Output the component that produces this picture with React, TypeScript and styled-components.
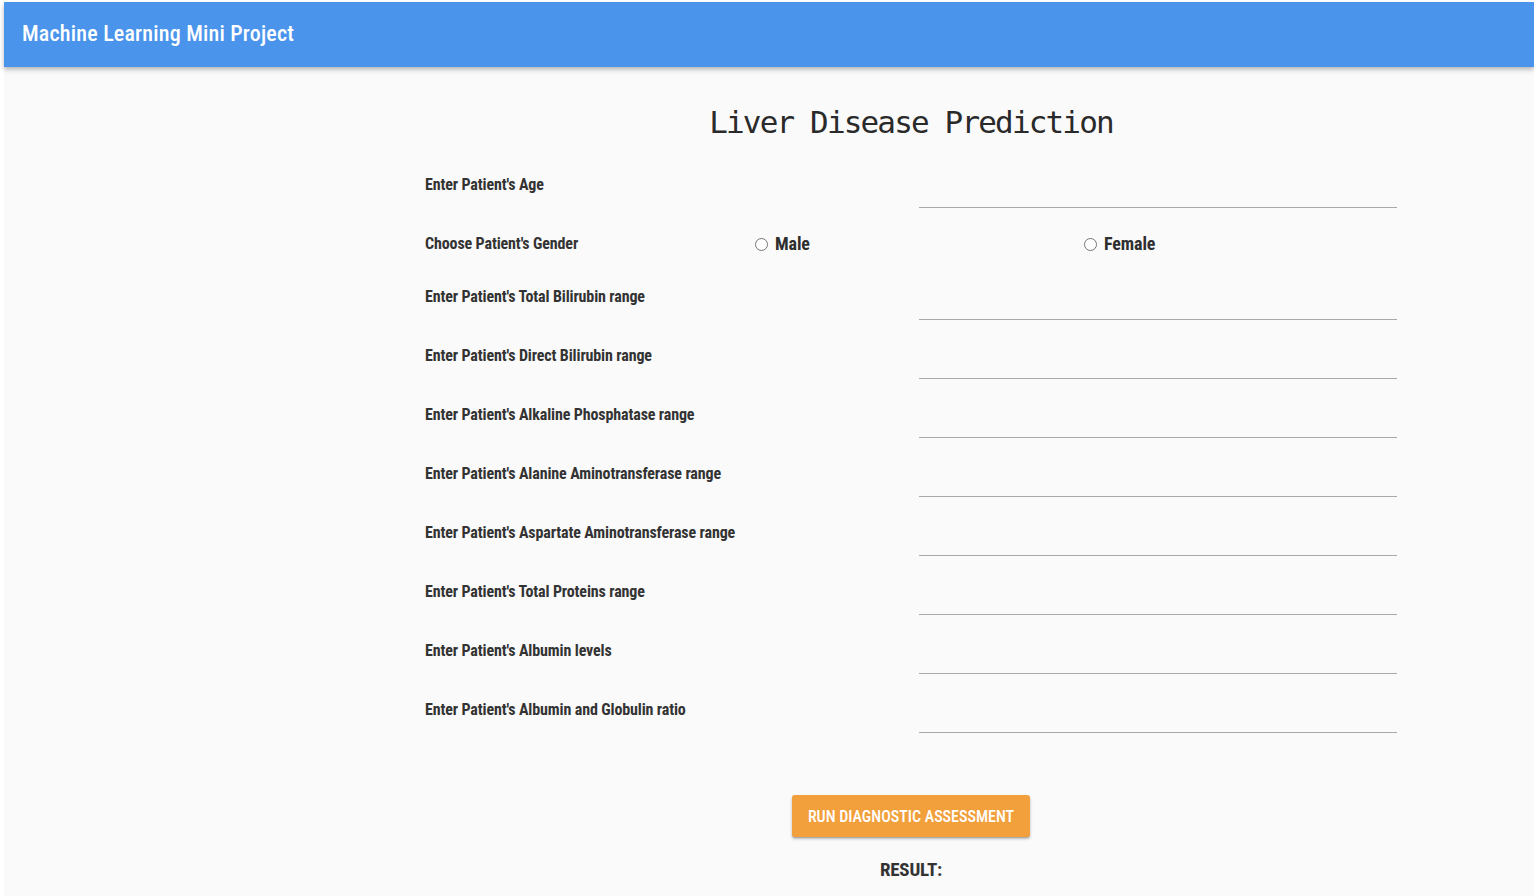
import React from "react";
import styled, { createGlobalStyle } from "styled-components";

const GlobalStyle = createGlobalStyle`
  html, body {
    margin: 0;
    padding: 0;
    background: #ffffff;
  }
  body {
    padding: 2px 0 0 4px;
    font-family: "Roboto Condensed", Roboto, "Liberation Sans", sans-serif;
  }
  * { box-sizing: border-box; }
`;

const Page = styled.div`
  min-height: calc(100vh - 2px);
  background: #fafafa;
  display: flex;
  flex-direction: column;
`;

const AppBar = styled.header`
  height: 65px;
  background: #4a95eb;
  display: flex;
  align-items: center;
  padding: 0 18px;
  box-shadow: 0 2px 4px rgba(0, 0, 0, 0.22), 0 4px 6px rgba(0, 0, 0, 0.08);
  position: relative;
  z-index: 1;
`;

const AppTitle = styled.h1`
  margin: 0 0 2px;
  font-family: "Roboto Condensed", Roboto, sans-serif;
  font-weight: 500;
  font-size: 22px;
  color: #ffffff;
  letter-spacing: 0.2px;
`;

const Main = styled.main`
  flex: 1;
  padding: 35px 0 0 284px;
  display: flex;
  justify-content: center;
`;

const Column = styled.div`
  width: 972px;
  display: flex;
  flex-direction: column;
`;

const Heading = styled.h2`
  margin: 0 0 7px;
  height: 40px;
  line-height: 40px;
  text-align: center;
  font-family: "DejaVu Sans Mono", "Liberation Mono", monospace;
  font-weight: 500;
  font-size: 31px;
  letter-spacing: -1.85px;
  color: #2a2a2a;
`;

const Form = styled.form`
  display: flex;
  flex-direction: column;
`;

const Row = styled.div`
  display: grid;
  grid-template-columns: 494px 1fr;
  align-items: end;
  height: 59px;
`;

const GenderRow = styled.div`
  display: grid;
  grid-template-columns: 330px 329px 1fr;
  align-items: end;
  height: 53px;
`;

const Label = styled.label<{ $pb?: number }>`
  font-family: "Roboto Condensed", Roboto, sans-serif;
  font-weight: 700;
  font-size: 16px;
  line-height: 20px;
  color: #333333;
  padding-bottom: ${(p) => p.$pb ?? 13}px;
  letter-spacing: -0.13px;
`;

const Input = styled.input`
  height: 36px;
  width: 100%;
  border: none;
  border-bottom: 1px solid #a8a8a8;
  background: transparent;
  outline: none;
  font-family: "Roboto Condensed", Roboto, sans-serif;
  font-size: 16px;
  padding: 0;
`;

const RadioLabel = styled.label`
  display: flex;
  align-items: center;
  gap: 7px;
  padding-bottom: 6px;
  font-family: "Roboto Condensed", Roboto, sans-serif;
  font-weight: 700;
  font-size: 18px;
  line-height: 22px;
  color: #2e2e2e;
  letter-spacing: -0.1px;
`;

const Radio = styled.input`
  appearance: none;
  margin: 0;
  width: 13px;
  height: 13px;
  border: 1px solid #767676;
  border-radius: 50%;
  background: #ffffff;
`;

const Actions = styled.div`
  display: flex;
  flex-direction: column;
  align-items: center;
  margin-top: 62px;
`;

const RunButton = styled.button`
  width: 238px;
  height: 42px;
  border: none;
  border-radius: 3px;
  background: #f2a03c;
  color: #ffffff;
  font-family: "Roboto Condensed", Roboto, sans-serif;
  font-weight: 500;
  font-size: 16px;
  letter-spacing: 0;
  text-transform: uppercase;
  box-shadow: 0 2px 3px rgba(0, 0, 0, 0.25), 0 1px 1px rgba(0, 0, 0, 0.14);
  cursor: pointer;
`;

const Result = styled.div`
  margin-top: 22px;
  font-family: "Roboto Condensed", Roboto, sans-serif;
  font-weight: 700;
  font-size: 19px;
  line-height: 22px;
  color: #333333;
  letter-spacing: -0.2px;
`;

const fields = [
  "Enter Patient's Total Bilirubin range",
  "Enter Patient's Direct Bilirubin range",
  "Enter Patient's Alkaline Phosphatase range",
  "Enter Patient's Alanine Aminotransferase range",
  "Enter Patient's Aspartate Aminotransferase range",
  "Enter Patient's Total Proteins range",
  "Enter Patient's Albumin levels",
  "Enter Patient's Albumin and Globulin ratio",
];

export default function App() {
  return (
    <>
      <GlobalStyle />
      <Page>
        <AppBar>
          <AppTitle>Machine Learning Mini Project</AppTitle>
        </AppBar>
        <Main>
          <Column>
            <Heading>Liver Disease Prediction</Heading>
            <Form onSubmit={(e) => e.preventDefault()}>
              <Row>
                <Label htmlFor="age">Enter Patient's Age</Label>
                <Input id="age" type="text" />
              </Row>
              <GenderRow>
                <Label $pb={7}>Choose Patient's Gender</Label>
                <RadioLabel>
                  <Radio type="radio" name="gender" value="male" />
                  Male
                </RadioLabel>
                <RadioLabel>
                  <Radio type="radio" name="gender" value="female" />
                  Female
                </RadioLabel>
              </GenderRow>
              {fields.map((f, i) => (
                <Row key={f}>
                  <Label htmlFor={`f${i}`}>{f}</Label>
                  <Input id={`f${i}`} type="text" />
                </Row>
              ))}
            </Form>
            <Actions>
              <RunButton type="button">Run Diagnostic Assessment</RunButton>
              <Result>RESULT:</Result>
            </Actions>
          </Column>
        </Main>
      </Page>
    </>
  );
}
